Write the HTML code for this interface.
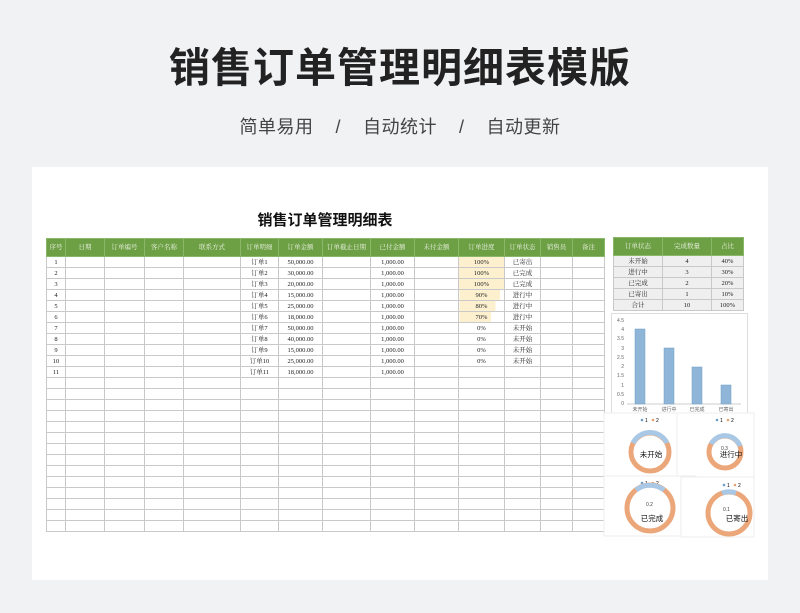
<!DOCTYPE html>
<html><head><meta charset="utf-8"><style>
*{margin:0;padding:0;box-sizing:border-box}
body{width:800px;height:613px;background:#f1f2f4;font-family:"Liberation Serif","Noto Serif CJK SC",serif;position:relative;overflow:hidden}
.h1{position:absolute;top:34px;left:0;width:800px;text-align:center;font:bold 41px "Liberation Sans","Noto Sans CJK SC",sans-serif;color:#222;letter-spacing:1px}
.sub{position:absolute;top:113px;left:0;width:800px;text-align:center;font:18px "Liberation Sans","Noto Sans CJK SC",sans-serif;color:#444;letter-spacing:0.5px}
.card{position:absolute;left:32px;top:167px;width:736px;height:413px;background:#fff}
.t{position:absolute;left:0;top:209px;width:650px;text-align:center;font:bold 15px "Liberation Sans","Noto Sans CJK SC",sans-serif;color:#111}
table{border-collapse:collapse;position:absolute;table-layout:fixed}
td{border:1px solid #c9c9c9;font-size:6.5px;text-align:center;height:11px;line-height:9px;color:#222;padding:0;white-space:nowrap;overflow:hidden}
tr.hd td{background:#6d9f45;color:#eef5e6;height:18px;border-color:#8ab868}
.p{background:linear-gradient(90deg,#fdf0cf var(--w),#fff var(--w))}
</style></head><body>
<div class="h1">销售订单管理明细表模版</div>
<div class="sub">简单易用 &nbsp;&nbsp;&nbsp;/&nbsp;&nbsp;&nbsp; 自动统计 &nbsp;&nbsp;&nbsp;/&nbsp;&nbsp;&nbsp; 自动更新</div>
<div class="card"></div>
<div class="t">销售订单管理明细表</div>
<table style="left:46px;top:238px;width:558px">
<colgroup><col style="width:19px"><col style="width:39px"><col style="width:40px"><col style="width:39px"><col style="width:57px"><col style="width:38px"><col style="width:44px"><col style="width:48px"><col style="width:44px"><col style="width:44px"><col style="width:46px"><col style="width:36px"><col style="width:32px"><col style="width:32px"></colgroup>
<tr class="hd"><td>序号</td><td>日期</td><td>订单编号</td><td>客户名称</td><td>联系方式</td><td>订单明细</td><td>订单金额</td><td>订单截止日期</td><td>已付金额</td><td>未付金额</td><td>订单进度</td><td>订单状态</td><td>销售员</td><td>备注</td></tr>
<tr><td>1</td><td></td><td></td><td></td><td></td><td>订单1</td><td>50,000.00</td><td></td><td>1,000.00</td><td></td><td class="p" style="--w:100%">100%</td><td>已寄出</td><td></td><td></td></tr>
<tr><td>2</td><td></td><td></td><td></td><td></td><td>订单2</td><td>30,000.00</td><td></td><td>1,000.00</td><td></td><td class="p" style="--w:100%">100%</td><td>已完成</td><td></td><td></td></tr>
<tr><td>3</td><td></td><td></td><td></td><td></td><td>订单3</td><td>20,000.00</td><td></td><td>1,000.00</td><td></td><td class="p" style="--w:100%">100%</td><td>已完成</td><td></td><td></td></tr>
<tr><td>4</td><td></td><td></td><td></td><td></td><td>订单4</td><td>15,000.00</td><td></td><td>1,000.00</td><td></td><td class="p" style="--w:90%">90%</td><td>进行中</td><td></td><td></td></tr>
<tr><td>5</td><td></td><td></td><td></td><td></td><td>订单5</td><td>25,000.00</td><td></td><td>1,000.00</td><td></td><td class="p" style="--w:80%">80%</td><td>进行中</td><td></td><td></td></tr>
<tr><td>6</td><td></td><td></td><td></td><td></td><td>订单6</td><td>18,000.00</td><td></td><td>1,000.00</td><td></td><td class="p" style="--w:70%">70%</td><td>进行中</td><td></td><td></td></tr>
<tr><td>7</td><td></td><td></td><td></td><td></td><td>订单7</td><td>50,000.00</td><td></td><td>1,000.00</td><td></td><td>0%</td><td>未开始</td><td></td><td></td></tr>
<tr><td>8</td><td></td><td></td><td></td><td></td><td>订单8</td><td>40,000.00</td><td></td><td>1,000.00</td><td></td><td>0%</td><td>未开始</td><td></td><td></td></tr>
<tr><td>9</td><td></td><td></td><td></td><td></td><td>订单9</td><td>15,000.00</td><td></td><td>1,000.00</td><td></td><td>0%</td><td>未开始</td><td></td><td></td></tr>
<tr><td>10</td><td></td><td></td><td></td><td></td><td>订单10</td><td>25,000.00</td><td></td><td>1,000.00</td><td></td><td>0%</td><td>未开始</td><td></td><td></td></tr>
<tr><td>11</td><td></td><td></td><td></td><td></td><td>订单11</td><td>18,000.00</td><td></td><td>1,000.00</td><td></td><td></td><td></td><td></td><td></td></tr>
<tr><td></td><td></td><td></td><td></td><td></td><td></td><td></td><td></td><td></td><td></td><td></td><td></td><td></td><td></td></tr>
<tr><td></td><td></td><td></td><td></td><td></td><td></td><td></td><td></td><td></td><td></td><td></td><td></td><td></td><td></td></tr>
<tr><td></td><td></td><td></td><td></td><td></td><td></td><td></td><td></td><td></td><td></td><td></td><td></td><td></td><td></td></tr>
<tr><td></td><td></td><td></td><td></td><td></td><td></td><td></td><td></td><td></td><td></td><td></td><td></td><td></td><td></td></tr>
<tr><td></td><td></td><td></td><td></td><td></td><td></td><td></td><td></td><td></td><td></td><td></td><td></td><td></td><td></td></tr>
<tr><td></td><td></td><td></td><td></td><td></td><td></td><td></td><td></td><td></td><td></td><td></td><td></td><td></td><td></td></tr>
<tr><td></td><td></td><td></td><td></td><td></td><td></td><td></td><td></td><td></td><td></td><td></td><td></td><td></td><td></td></tr>
<tr><td></td><td></td><td></td><td></td><td></td><td></td><td></td><td></td><td></td><td></td><td></td><td></td><td></td><td></td></tr>
<tr><td></td><td></td><td></td><td></td><td></td><td></td><td></td><td></td><td></td><td></td><td></td><td></td><td></td><td></td></tr>
<tr><td></td><td></td><td></td><td></td><td></td><td></td><td></td><td></td><td></td><td></td><td></td><td></td><td></td><td></td></tr>
<tr><td></td><td></td><td></td><td></td><td></td><td></td><td></td><td></td><td></td><td></td><td></td><td></td><td></td><td></td></tr>
<tr><td></td><td></td><td></td><td></td><td></td><td></td><td></td><td></td><td></td><td></td><td></td><td></td><td></td><td></td></tr>
<tr><td></td><td></td><td></td><td></td><td></td><td></td><td></td><td></td><td></td><td></td><td></td><td></td><td></td><td></td></tr>
<tr><td></td><td></td><td></td><td></td><td></td><td></td><td></td><td></td><td></td><td></td><td></td><td></td><td></td><td></td></tr>
</table>
<table style="left:613px;top:237px;width:130px">
<colgroup><col style="width:49px"><col style="width:49px"><col style="width:32px"></colgroup>
<tr class="hd"><td>订单状态</td><td>完成数量</td><td>占比</td></tr>
<tr style="background:#efefef"><td>未开始</td><td>4</td><td>40%</td></tr>
<tr style="background:#efefef"><td>进行中</td><td>3</td><td>30%</td></tr>
<tr style="background:#efefef"><td>已完成</td><td>2</td><td>20%</td></tr>
<tr style="background:#efefef"><td>已寄出</td><td>1</td><td>10%</td></tr>
<tr style="background:#efefef"><td>合计</td><td>10</td><td>100%</td></tr>
</table>
<svg style="position:absolute;left:0;top:0" width="800" height="613" font-family="Liberation Sans,Noto Sans CJK SC,sans-serif">
<rect x="611.5" y="313.5" width="136" height="100" fill="#fff" stroke="#ddd"/>
<g font-size="5" fill="#666" text-anchor="end">
<text x="624" y="322">4.5</text><text x="624" y="331">4</text><text x="624" y="340">3.5</text><text x="624" y="350">3</text><text x="624" y="359">2.5</text><text x="624" y="368">2</text><text x="624" y="377">1.5</text><text x="624" y="387">1</text><text x="624" y="396">0.5</text><text x="624" y="405">0</text></g>
<line x1="627" y1="404" x2="741" y2="404" stroke="#ccc"/>
<g fill="#8fb6d8" stroke="#6f9cc4" stroke-width=".5">
<rect x="635" y="329" width="10" height="75"/><rect x="664" y="348" width="10" height="56"/><rect x="692" y="367" width="10" height="37"/><rect x="721" y="385" width="10" height="19"/></g>
<g font-size="5" fill="#666" text-anchor="middle"><text x="640" y="411">未开始</text><text x="669" y="411">进行中</text><text x="697" y="411">已完成</text><text x="726" y="411">已寄出</text></g>
<g stroke="#eee" fill="#fff"><rect x="604" y="413" width="73" height="65"/><rect x="677" y="413" width="77" height="64"/><rect x="604" y="476" width="92" height="60"/><rect x="681" y="477" width="73" height="60"/></g>
<g font-size="5"><circle cx="642" cy="420" r="1.3" fill="#6f9cc4"/><circle cx="653" cy="420" r="1.3" fill="#e8a070"/><text x="645" y="422">1</text><text x="656" y="422">2</text>
<circle cx="717" cy="420" r="1.3" fill="#6f9cc4"/><circle cx="728" cy="420" r="1.3" fill="#e8a070"/><text x="720" y="422">1</text><text x="731" y="422">2</text>
<circle cx="642" cy="483" r="1.3" fill="#6f9cc4"/><circle cx="653" cy="483" r="1.3" fill="#e8a070"/><text x="645" y="485">1</text><text x="656" y="485">2</text>
<circle cx="724" cy="485" r="1.3" fill="#6f9cc4"/><circle cx="735" cy="485" r="1.3" fill="#e8a070"/><text x="727" y="487">1</text><text x="738" y="487">2</text></g>
<g fill="none" stroke-width="5">
<circle cx="650" cy="452" r="19" stroke="#eba77a"/><path d="M633 443 A19 19 0 0 1 667 443" stroke="#a9c8e6"/>
<circle cx="725" cy="452" r="16" stroke="#eba77a"/><path d="M711 444 A16 16 0 0 1 740 446" stroke="#a9c8e6"/>
<circle cx="650" cy="508" r="23" stroke="#eba77a"/><path d="M636 490 A23 23 0 0 1 664 490" stroke="#a9c8e6"/>
<circle cx="729" cy="513" r="21" stroke="#eba77a"/><path d="M722 493 A21 21 0 0 1 736 493" stroke="#a9c8e6"/></g>
<g font-size="7.5" fill="#111" text-anchor="middle"><text x="651" y="457">未开始</text><text x="731" y="457">进行中</text><text x="652" y="521">已完成</text><text x="737" y="521">已寄出</text></g>
<g font-size="5" fill="#444"><text x="646" y="506">0.2</text><text x="723" y="511">0.1</text><text x="721" y="450">0.3</text></g>
</svg>
</body></html>
